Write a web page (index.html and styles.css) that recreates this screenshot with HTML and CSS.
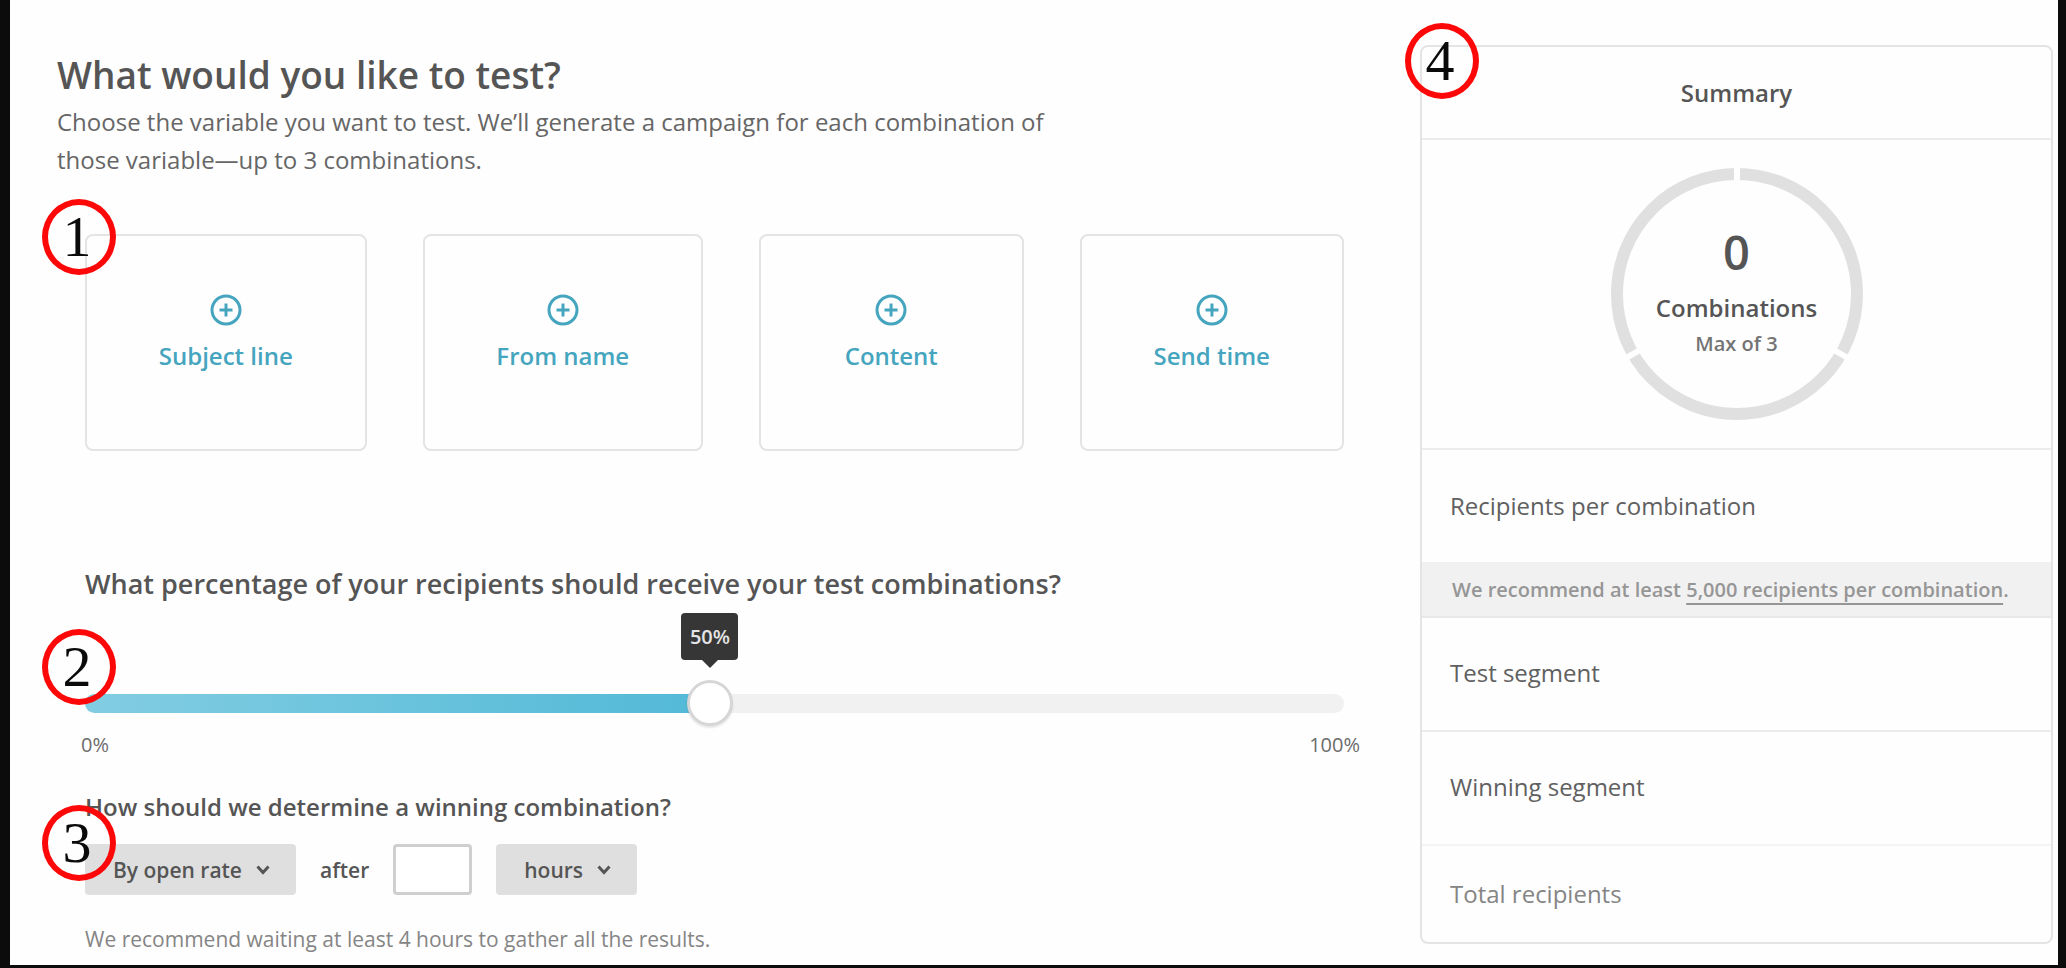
FILE: index.html
```html
<!DOCTYPE html>
<html lang="en">
<head>
<meta charset="utf-8">
<title>What would you like to test?</title>
<link rel="stylesheet" href="styles.css">
</head>
<body>
<div class="page">
  <main class="setup">
    <h1 class="title">What would you like to test?</h1>
    <p class="intro">Choose the variable you want to test. We’ll generate a campaign for each combination of those variable—up to 3 combinations.</p>

    <div class="fields">
      <section class="variables anchor">
        <span class="step">1</span>
        <button class="card" type="button">
          <svg class="plus" viewBox="0 0 32 32" aria-hidden="true"><circle cx="16" cy="16" r="14"/><path d="M16 9.500v13M9.500 16h13"/></svg>
          Subject line
        </button>
        <button class="card" type="button">
          <svg class="plus" viewBox="0 0 32 32" aria-hidden="true"><circle cx="16" cy="16" r="14"/><path d="M16 9.500v13M9.500 16h13"/></svg>
          From name
        </button>
        <button class="card" type="button">
          <svg class="plus" viewBox="0 0 32 32" aria-hidden="true"><circle cx="16" cy="16" r="14"/><path d="M16 9.500v13M9.500 16h13"/></svg>
          Content
        </button>
        <button class="card" type="button">
          <svg class="plus" viewBox="0 0 32 32" aria-hidden="true"><circle cx="16" cy="16" r="14"/><path d="M16 9.500v13M9.500 16h13"/></svg>
          Send time
        </button>
      </section>

      <section class="share">
        <h2 class="question"><label for="share">What percentage of your recipients should receive your test combinations?</label></h2>
        <div class="slider anchor">
          <span class="step">2</span>
          <input class="range" id="share" type="range" min="0" max="100" step="0.1" value="49.6">
          <output class="tip" for="share">50%</output>
        </div>
        <div class="scale"><span>0%</span><span>100%</span></div>
      </section>

      <section class="winner anchor">
        <span class="step">3</span>
        <h3 class="subquestion">How should we determine a winning combination?</h3>
        <div class="controls">
          <span class="picker">
            <select class="select" aria-label="Winning measure"><option>By open rate</option></select>
            <svg class="chevron" viewBox="0 0 14 10" aria-hidden="true"><path d="M1.500 1.500l5.500 6 5.500-6"/></svg>
          </span>
          <label class="after" for="wait">after</label>
          <input class="amount" id="wait" type="text">
          <span class="picker">
            <select class="select" aria-label="Time unit"><option>hours</option></select>
            <svg class="chevron" viewBox="0 0 14 10" aria-hidden="true"><path d="M1.500 1.500l5.500 6 5.500-6"/></svg>
          </span>
        </div>
        <p class="note">We recommend waiting at least 4 hours to gather all the results.</p>
      </section>
    </div>
  </main>

  <aside class="summary anchor">
    <span class="step">4</span>
    <h2 class="summary-title">Summary</h2>
    <div class="chart">
      <svg class="ring" viewBox="0 0 252 252" aria-hidden="true">
        <circle cx="126" cy="126" r="120"/>
        <path d="M126 126V-2M126 126L236.900 190M126 126L15.100 190"/>
      </svg>
      <div class="tally">
        <strong class="count">0</strong>
        <span class="count-label">Combinations</span>
        <span class="count-max">Max of 3</span>
      </div>
    </div>
    <div class="row row-plain">Recipients per combination</div>
    <p class="advice">We recommend at least <a class="advice-link" href="#">5,000 recipients per combination</a>.</p>
    <div class="row">Test segment</div>
    <div class="row row-faint">Winning segment</div>
    <div class="row row-total">Total recipients</div>
  </aside>
</div>
</body>
</html>
```

FILE: styles.css
```css
* {
  box-sizing: border-box;
}

body {
  margin: 0;
  background: #0c0c0c;
  color: #555;
  font-family: "Open Sans", sans-serif;
  font-size: 24px;
  line-height: 32px;
}

h1, h2, h3, p {
  margin: 0;
}

button, input, select {
  font: inherit;
  color: inherit;
}

.page {
  display: grid;
  grid-template-columns: minmax(0, 1287fr) minmax(0, 633fr);
  gap: 76px;
  align-items: start;
  min-height: calc(100vh - 3px);
  margin: 0 8px 3px 10px;
  padding: 45px 5px 12px 47px;
  background: #fefefe;
}

.anchor {
  position: relative;
}

/* Numbered callouts sit over the corner of their section. */
.step {
  position: absolute;
  z-index: 1;
  display: grid;
  place-items: center;
  width: 74px;
  height: 76px;
  padding-right: 4px;
  border: 6px solid #fc0808;
  border-radius: 50%;
  color: #0a0a0a;
  font-family: "Liberation Serif", serif;
  font-size: 58px;
  line-height: 64px;
  pointer-events: none;
}

.setup {
  padding-top: 6px;
}

.title {
  font-size: 37px;
  font-weight: 600;
  line-height: 48px;
}

.intro {
  max-width: 1000px;
  margin-top: 4px;
  color: #666;
  line-height: 38px;
}

.fields {
  padding-left: 28px;
}

.variables {
  display: grid;
  grid-template-columns: 281fr 280fr 264fr 264fr;
  gap: 56px;
  margin-top: 55px;
}

.variables .step {
  left: -43px;
  top: -35px;
}

.card {
  display: flex;
  flex-direction: column;
  align-items: center;
  gap: 14px;
  min-width: 0;
  padding: 58px 12px 77px;
  height: 217px;
  border: 2px solid #e4e4e4;
  border-radius: 8px;
  background: none;
  color: #45a5bf;
  font-weight: 600;
}

.plus {
  width: 32px;
  height: 32px;
  flex: none;
  fill: none;
  stroke: currentColor;
  stroke-width: 3;
}

.share {
  margin-top: 115px;
}

.question {
  font-size: 27px;
  font-weight: 600;
  line-height: 36px;
}

.slider {
  display: flex;
  margin-top: 78px;
}

.slider .step {
  left: -43px;
  top: -51px;
}

.range {
  --fill: 49.6%;
  appearance: none;
  width: 100%;
  height: 46px;
  margin: 0;
  background: none;
}

.range::-webkit-slider-runnable-track {
  height: 19px;
  border-radius: 10px;
  background: linear-gradient(90deg, #82cde2, #52b9d7) 0 0 / var(--fill) 100% no-repeat, #f1f1f1;
}

.range::-webkit-slider-thumb {
  appearance: none;
  width: 46px;
  height: 46px;
  margin-top: -14px;
  border: 3px solid #d6d6d6;
  border-radius: 50%;
  background: #fff;
  box-shadow: 0 2px 2px rgba(0, 0, 0, 0.1);
}

.tip {
  position: absolute;
  left: 49.6%;
  bottom: 66px;
  width: 57px;
  margin-left: -28px;
  border-radius: 4px;
  background: #363636;
  color: #e4e4e4;
  font-size: 20px;
  font-weight: 600;
  line-height: 47px;
  text-align: center;
}

.tip::after {
  content: "";
  position: absolute;
  left: 50%;
  top: 100%;
  margin-left: -8px;
  border: 8px solid transparent;
  border-top-color: #363636;
  border-bottom: 0;
}

.scale {
  display: flex;
  justify-content: space-between;
  margin: 5px -16px 0 -4px;
  color: #6c6c6c;
  font-size: 20px;
  line-height: 28px;
}

.winner {
  margin-top: 32px;
}

.winner .step {
  left: -43px;
  top: 14px;
}

.subquestion {
  font-size: 24px;
  font-weight: 600;
  line-height: 32px;
}

.controls {
  display: flex;
  align-items: center;
  margin-top: 21px;
  font-size: 21px;
  font-weight: 600;
}

.picker {
  position: relative;
  display: flex;
}

.select {
  appearance: none;
  height: 51px;
  padding: 0 54px 0 28px;
  border: 0;
  border-radius: 4px;
  background: #dfdfdf;
}

.chevron {
  position: absolute;
  right: 26px;
  top: 21px;
  width: 14px;
  height: 10px;
  fill: none;
  stroke: currentColor;
  stroke-width: 3;
  pointer-events: none;
}

.after {
  margin: 0 24px;
}

.amount {
  width: 79px;
  height: 51px;
  margin-right: 24px;
  padding: 0 12px;
  border: 3px solid #cfcfcf;
  border-radius: 4px;
  background: #fff;
}

.note {
  margin-top: 30px;
  color: #858585;
  font-size: 21px;
  line-height: 28px;
}

.summary {
  border: 2px solid #e4e4e4;
  border-radius: 8px;
}

.summary .step {
  left: -17px;
  top: -24px;
}

.summary-title {
  padding: 30px 0 29px;
  border-bottom: 2px solid #ececec;
  font-size: 24px;
  font-weight: 600;
  line-height: 32px;
  text-align: center;
}

.chart {
  display: grid;
  place-items: center;
  padding: 28px 0;
  border-bottom: 2px solid #ececec;
}

.ring,
.tally {
  grid-area: 1 / 1;
}

.ring {
  width: 252px;
  height: 252px;
  fill: none;
}

.ring circle {
  stroke: #e0e0e0;
  stroke-width: 12;
}

.ring path {
  stroke: #fefefe;
  stroke-width: 6;
}

.tally {
  display: flex;
  flex-direction: column;
  align-items: center;
  gap: 4px;
  padding-bottom: 4px;
}

.count {
  margin-bottom: 8px;
  font-size: 47px;
  font-weight: 600;
  line-height: 56px;
}

.count-label {
  font-weight: 600;
}

.count-max {
  color: #747474;
  font-size: 20px;
  font-weight: 600;
}

.row {
  padding: 39px 28px 41px;
  border-bottom: 2px solid #ececec;
  color: #606060;
}

.row-plain {
  padding: 40px 28px;
  border-bottom: 0;
}

.advice {
  padding: 12px 30px 10px;
  border-bottom: 2px solid #e8e8e8;
  background: #f1f1f1;
  color: #969696;
  font-size: 20px;
  font-weight: 600;
}

.advice-link {
  color: inherit;
  text-decoration-thickness: 2px;
  text-underline-offset: 6px;
  text-decoration-skip-ink: none;
}

.row-faint {
  border-color: #f4f4f4;
}

.row-total {
  padding: 32px 28px;
  border-bottom: 0;
  color: #858585;
}
```
